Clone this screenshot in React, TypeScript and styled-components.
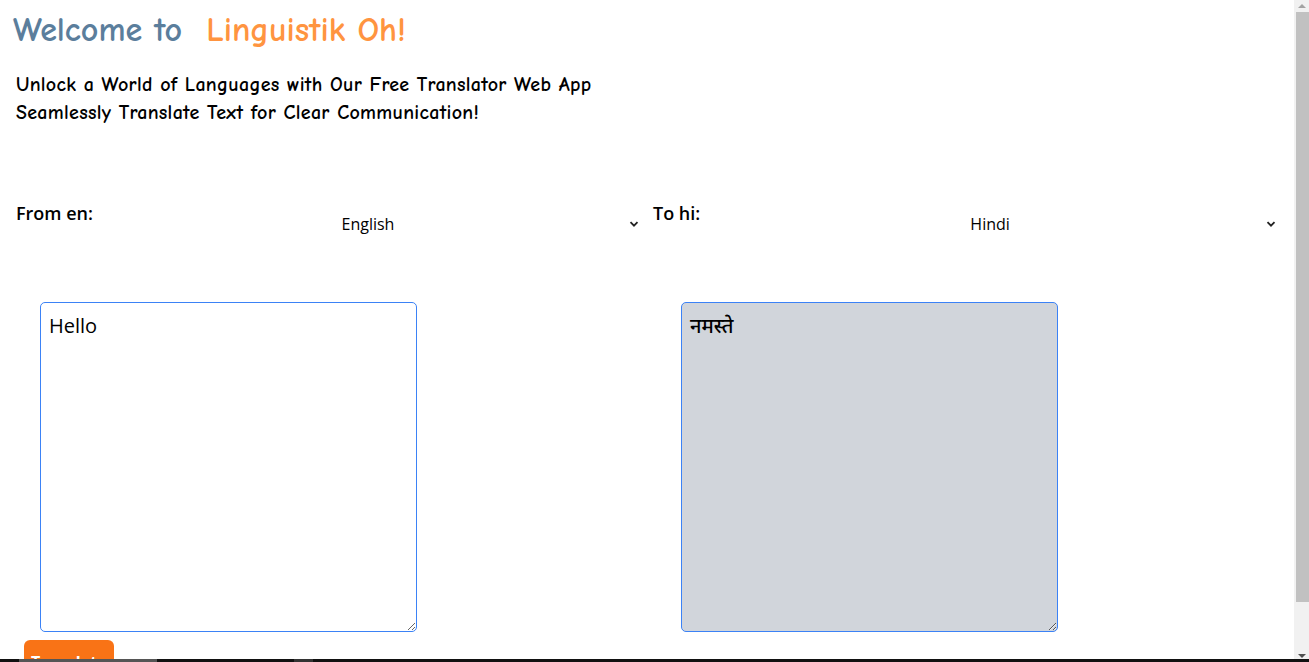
import styled, { createGlobalStyle } from "styled-components";

const GlobalStyle = createGlobalStyle`
  html, body {
    margin: 0;
    padding: 0;
    background: #ffffff;
    overflow: hidden;
  }
  body {
    font-family: "Open Sans", "Noto Sans", sans-serif;
    color: #000;
  }
`;

const Page = styled.main`
  min-height: 710px;
  padding: 8px 16px 0 13px;
`;

const Title = styled.h1`
  font-family: "Comic Sans MS", "Comic Neue", Lato, sans-serif;
  font-size: 34px;
  font-weight: 700;
  margin: 0;
  line-height: 44px;
  display: flex;
  gap: 24px;
`;

const TitlePart = styled.span<{ $tone: string }>`
  color: ${(p) => p.$tone};
`;

const Tagline = styled.div`
  font-family: "Comic Sans MS", "Comic Neue", Lato, sans-serif;
  font-weight: 700;
  font-size: 20px;
  line-height: 28px;
  margin: 19px 0 0 3px;
  letter-spacing: 0.3px;
`;

const Pickers = styled.section`
  display: grid;
  grid-template-columns: 629px 629px;
  column-gap: 8px;
  margin: 73px 0 0 3px;
`;

const Picker = styled.div`
  display: flex;
  align-items: flex-start;
  gap: 4px;
`;

const Label = styled.label`
  font-size: 18px;
  font-weight: 600;
  line-height: 26px;
  white-space: nowrap;
`;

const SelectWrap = styled.div`
  position: relative;
  flex: 1;
`;

const Select = styled.select`
  appearance: none;
  width: 100%;
  height: 48px;
  border: none;
  background: transparent;
  font-family: "Open Sans", "Noto Sans", sans-serif;
  font-size: 16px;
  color: #000;
  text-align: center;
  text-align-last: center;
  padding: 0 6px 0 0;
  outline: none;
`;

const Chevron = styled.svg`
  position: absolute;
  right: 6px;
  top: 19px;
  width: 10px;
  height: 10px;
  pointer-events: none;
`;

const Panes = styled.section`
  display: grid;
  grid-template-columns: 377px 377px;
  column-gap: 264px;
  margin: 54px 0 0 27px;
`;

const TextBox = styled.textarea<{ $filled?: boolean }>`
  box-sizing: border-box;
  width: 377px;
  height: 330px;
  border: 1px solid #3b82f6;
  border-radius: 5px;
  padding: 10px 8px;
  font-family: "Open Sans", "Noto Sans", "Noto Sans Devanagari", sans-serif;
  font-size: 20px;
  font-weight: 500;
  line-height: 26px;
  color: #000;
  background: ${(p) => (p.$filled ? "#d1d5db" : "#ffffff")};
  outline: none;
  resize: both;
`;

const TranslateButton = styled.button`
  display: block;
  margin: 8px 0 0 11px;
  padding: 12px 7px;
  border: none;
  border-radius: 6px;
  background: #f97316;
  color: #fff;
  font-family: "Open Sans", "Noto Sans", sans-serif;
  font-size: 16px;
  font-weight: 700;
  line-height: 20px;
`;

const Scrollbar = styled.div`
  position: fixed;
  top: 0;
  right: 0;
  bottom: 0;
  width: 15px;
  background: #f1f1f1;
  display: flex;
  flex-direction: column;
  align-items: center;
`;

const ScrollArrow = styled.div<{ $down?: boolean }>`
  height: 12px;
  width: 100%;
  display: flex;
  align-items: center;
  justify-content: center;
  &::after {
    content: "";
    border-left: 4px solid transparent;
    border-right: 4px solid transparent;
    ${(p) =>
      p.$down ? "border-top: 4px solid #505050;" : "border-bottom: 4px solid #a3a3a3;"}
  }
`;

const ScrollThumb = styled.div`
  width: 13px;
  height: 590px;
  margin-left: 2px;
  background: #c1c1c1;
`;

const ScrollSpace = styled.div`
  flex: 1;
`;

const Taskbar = styled.div`
  position: fixed;
  left: 0;
  right: 0;
  bottom: 0;
  height: 3px;
  background: #111;
  display: flex;
`;

const TaskSlot = styled.span<{ $left: number; $width: number; $shade: string }>`
  margin-left: ${(p) => p.$left}px;
  width: ${(p) => p.$width}px;
  background: ${(p) => p.$shade};
`;

const ChevronIcon = () => (
  <Chevron viewBox="0 0 10 10">
    <path d="M1.5 3.2 L5 6.7 L8.5 3.2" fill="none" stroke="#222" strokeWidth="1.8" />
  </Chevron>
);

export default function App() {
  return (
    <>
      <GlobalStyle />
      <Page>
        <Title>
          <TitlePart $tone="#5b7e9c">Welcome to</TitlePart>
          <TitlePart $tone="#ff9440">Linguistik Oh!</TitlePart>
        </Title>
        <Tagline>
          Unlock a World of Languages with Our Free Translator Web App
          <br />
          Seamlessly Translate Text for Clear Communication!
        </Tagline>

        <Pickers>
          <Picker>
            <Label>From en:</Label>
            <SelectWrap>
              <Select defaultValue="en">
                <option value="en">English</option>
                <option value="hi">Hindi</option>
              </Select>
              <ChevronIcon />
            </SelectWrap>
          </Picker>
          <Picker>
            <Label>To hi:</Label>
            <SelectWrap>
              <Select defaultValue="hi">
                <option value="en">English</option>
                <option value="hi">Hindi</option>
              </Select>
              <ChevronIcon />
            </SelectWrap>
          </Picker>
        </Pickers>

        <Panes>
          <TextBox defaultValue="Hello" />
          <TextBox $filled readOnly defaultValue="नमस्ते" />
        </Panes>

        <TranslateButton>Translate</TranslateButton>
      </Page>
      <Scrollbar>
        <ScrollArrow />
        <ScrollThumb />
        <ScrollSpace />
        <ScrollArrow $down />
      </Scrollbar>
      <Taskbar>
        <TaskSlot $left={19} $width={138} $shade="#555" />
        <TaskSlot $left={137} $width={19} $shade="#333" />
      </Taskbar>
    </>
  );
}
